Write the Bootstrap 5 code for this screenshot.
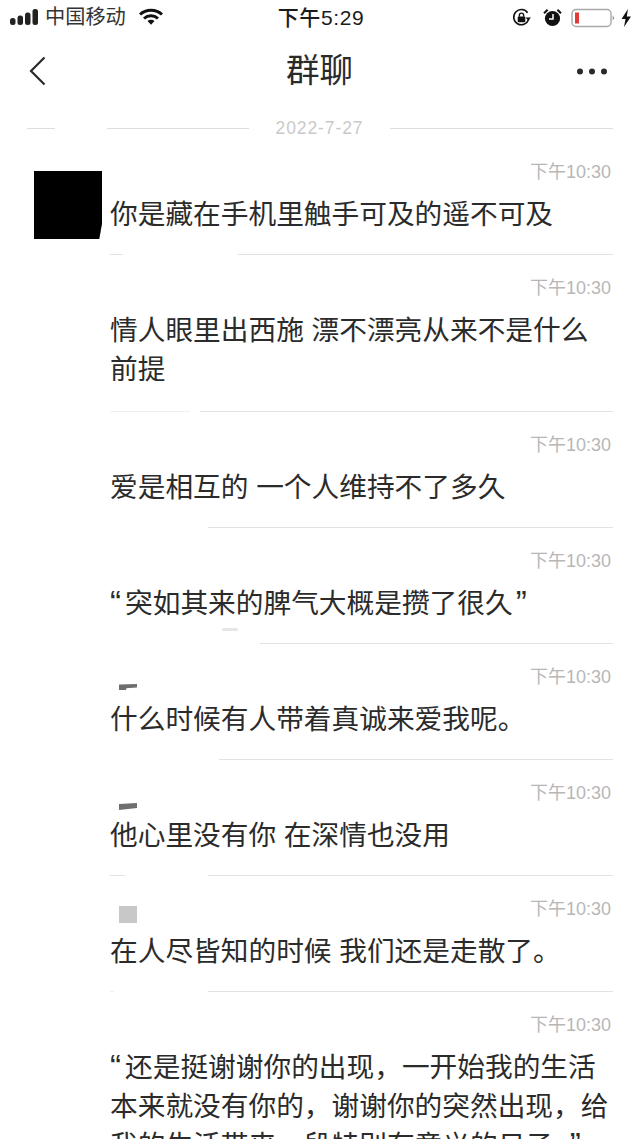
<!DOCTYPE html>
<html lang="zh-CN">
<head>
    <meta charset="UTF-8">
    <title>群聊</title>
    <link href="https://cdn.jsdelivr.net/npm/bootstrap@5.3.0/dist/css/bootstrap.min.css" rel="stylesheet">
    <style>
        body {
            font-family: "Liberation Sans", "Noto Sans CJK SC", sans-serif;
            background: #fff;
            color: #2b2b2b;
        }
        .phone { height: 1139px; overflow: hidden; }

        /* status bar */
        .status-bar { height: 35px; padding: 0 8px 0 10px; font-size: 20.2px; color: #333; }
        .status-left, .status-right { width: 220px; }
        .signal { margin-right: 6px; }
        .wifi { margin-left: 13px; }
        .status-time { font-size: 21px; font-weight: 500; color: #1c1c1c; letter-spacing: .6px; }
        .lock-icon { margin-right: 11px; }
        .alarm-icon { margin-right: 9px; }
        .battery { margin-right: 6px; }

        /* header */
        .chat-head { height: 72px; padding: 0 33px 0 29px; }
        .head-side { width: 60px; }
        .chat-title { font-size: 33.5px; line-height: 1; color: #2a2a2a; margin-left: 3px; }

        /* date separator */
        .date-line { height: 42px; padding: 0 27px; margin-bottom: -1px; }
        .date-text { font-size: 17.5px; letter-spacing: .9px; color: #c9c9c9; width: 141px; text-align: center; }
        .rule { height: 1px; background: #dedede; }
        .rule-a { width: 28px; margin-right: 52px; }
        .rule-b { width: 142px; }

        /* messages */
        .msg { padding: 22px 27px 0 34px; }
        .msg-first { padding-top: 13px; }
        .msg-side { width: 76px; flex: none; }
        .avatar {
            width: 68px;
            height: 68px;
            margin-top: 10px;
            background: #000;
            clip-path: polygon(0 0, 100% 0, 100% 78%, 96% 100%, 0 100%);
        }
        .msg-body { position: relative; flex: 1; min-width: 0; }
        .msg-time { font-size: 18px; line-height: 22px; color: #b7b7b7; text-align: right; padding-right: 2px; }
        .msg-text { font-size: 27.7px; line-height: 39px; margin: 12px 0 0; color: #2b2b2b; }
        .msg-tall { padding-bottom: 2px; }
        .quote-mark { font-size: 33px; line-height: 0; vertical-align: -1px; }
        .quote-open { margin-right: 4px; }
        .quote-close { margin-left: 3px; }
        .msg-rule { height: 1px; margin-top: 20px; }
        .msg-rule .rule { background: #e2e2e2; }
        .gap-r1 { width: 13px; margin-right: 115px; }
        .gap-r2 { width: 80px; margin-right: 10px; background: #efefef !important; }
        .gap-r3 { margin-left: 98px; }
        .gap-r4 { margin-left: 150px; }
        .gap-r5 { margin-left: 109px; }
        .gap-r6 { width: 15px; margin-right: 83px; }
        .gap-r7 { width: 4px; margin-right: 94px; background: #f0f0f0 !important; }

        /* leftover marks where names were blanked out */
        .scrap { position: absolute; background: #6f6f6f; }
        .scrap-dash { left: 9px; top: 18px; width: 18px; height: 6px; clip-path: polygon(0 10%, 100% 0, 100% 60%, 40% 70%, 40% 100%, 0 100%); }
        .scrap-dash-2 { left: 9px; top: 21px; width: 18px; height: 7px; clip-path: polygon(0 15%, 100% 0, 100% 70%, 0 100%); }
        .scrap-square { left: 9px; top: 8px; width: 18px; height: 17px; background: #c8c8c8; }
        .scrap-smear { left: 112px; top: 78px; width: 16px; height: 3px; background: #e6e6e6; border-radius: 2px; }
    </style>
</head>
<body>

<div class="phone">
    <!-- Status bar -->
    <div class="status-bar d-flex align-items-center justify-content-between">
        <div class="status-left d-flex align-items-center">
            <svg width="29" height="17" viewBox="0 0 29 17" class="signal">
                <rect x="0" y="9" width="5.5" height="7" rx="2.5" fill="#222"/>
                <rect x="7.5" y="6.5" width="5.5" height="9.5" rx="2.5" fill="#222"/>
                <rect x="15" y="3.5" width="5.5" height="12.5" rx="2.5" fill="#222"/>
                <rect x="22.5" y="0" width="5.5" height="16" rx="2.5" fill="#222"/>
            </svg>
            <span>中国移动</span>
            <svg width="24" height="18" viewBox="0 0 24 18" class="wifi">
                <path d="M1 6.5C7 .8 17 .8 23 6.5" fill="none" stroke="#111" stroke-width="3"/>
                <path d="M5 10.5c4-3.6 10-3.6 14 0" fill="none" stroke="#111" stroke-width="3"/>
                <path d="M8.5 13 12 16.8 15.5 13c-2-1.6-5-1.6-7 0z" fill="#111"/>
            </svg>
        </div>
        <div class="status-time">下午5:29</div>
        <div class="status-right d-flex align-items-center justify-content-end">
            <svg width="20" height="20" viewBox="0 0 20 20" class="lock-icon">
                <path d="M16.6 11.5A7.6 7.6 0 1 1 15.6 4.8" fill="none" stroke="#111" stroke-width="1.6"/>
                <path d="M13.6 9.5h5.4l-2.7 3.2z" fill="#111"/>
                <rect x="5.7" y="8.6" width="7.6" height="5.6" rx="1" fill="#111"/>
                <path d="M7.4 8.8V7.2a2.1 2.1 0 0 1 4.2 0v1.6" fill="none" stroke="#111" stroke-width="1.4"/>
            </svg>
            <svg width="19" height="19" viewBox="0 0 19 19" class="alarm-icon">
                <circle cx="9.5" cy="10.5" r="7.6" fill="#111"/>
                <path d="M1 5.2 4.6 1.8M18 5.2 14.4 1.8" stroke="#111" stroke-width="2"/>
                <path d="M10 6v5H6" fill="none" stroke="#fff" stroke-width="1.5"/>
            </svg>
            <svg width="44" height="20" viewBox="0 0 44 20" class="battery">
                <rect x="1" y="1.5" width="39" height="17" rx="4" fill="#fff" stroke="#a9a9a9" stroke-width="1.4"/>
                <rect x="4" y="4.5" width="4" height="11" fill="#e23b35"/>
                <path d="M41.6 7.5 43.4 10l-1.8 2.5z" fill="#8f8f8f"/>
            </svg>
            <svg width="11" height="18" viewBox="0 0 11 18">
                <path d="M7 0 .5 10h4L3 18l7-10.5H5.8z" fill="#111"/>
            </svg>
        </div>
    </div>

    <!-- Header -->
    <nav class="chat-head d-flex align-items-center justify-content-between">
        <div class="head-side d-flex">
            <svg width="18" height="30" viewBox="0 0 18 30">
                <path d="M15.5 1.5 2 15l13.5 13.5" fill="none" stroke="#2a2a2a" stroke-width="2.2"/>
            </svg>
        </div>
        <div class="chat-title">群聊</div>
        <div class="head-side d-flex justify-content-end">
            <svg width="30" height="7" viewBox="0 0 30 7">
                <circle cx="3" cy="3.5" r="3" fill="#2a2a2a"/>
                <circle cx="15" cy="3.5" r="3" fill="#2a2a2a"/>
                <circle cx="27" cy="3.5" r="3" fill="#2a2a2a"/>
            </svg>
        </div>
    </nav>

    <!-- Date -->
    <div class="date-line d-flex align-items-center">
        <div class="rule rule-a"></div>
        <div class="rule rule-b"></div>
        <div class="date-text">2022-7-27</div>
        <div class="rule flex-grow-1"></div>
    </div>

    <!-- Messages -->
    <div class="msg msg-first d-flex">
        <div class="msg-side"><div class="avatar"></div></div>
        <div class="msg-body">
            <div class="msg-time">下午10:30</div>
            <p class="msg-text">你是藏在手机里触手可及的遥不可及</p>
            <div class="msg-rule d-flex">
                <div class="rule gap-r1"></div>
                <div class="rule flex-grow-1"></div>
            </div>
        </div>
    </div>

    <div class="msg d-flex">
        <div class="msg-side"></div>
        <div class="msg-body">
            <div class="msg-time">下午10:30</div>
            <p class="msg-text msg-tall">情人眼里出西施 漂不漂亮从来不是什么前提</p>
            <div class="msg-rule d-flex">
                <div class="rule gap-r2"></div>
                <div class="rule flex-grow-1"></div>
            </div>
        </div>
    </div>

    <div class="msg d-flex">
        <div class="msg-side"></div>
        <div class="msg-body">
            <div class="msg-time">下午10:30</div>
            <p class="msg-text">爱是相互的 一个人维持不了多久</p>
            <div class="msg-rule d-flex">
                <div class="rule gap-r3 flex-grow-1"></div>
            </div>
        </div>
    </div>

    <div class="msg d-flex">
        <div class="msg-side"></div>
        <div class="msg-body">
            <div class="msg-time">下午10:30</div>
            <p class="msg-text"><span class="quote-mark quote-open">“</span>突如其来的脾气大概是攒了很久<span class="quote-mark quote-close">”</span></p>
            <div class="scrap scrap-smear"></div>
            <div class="msg-rule d-flex">
                <div class="rule gap-r4 flex-grow-1"></div>
            </div>
        </div>
    </div>

    <div class="msg d-flex">
        <div class="msg-side"></div>
        <div class="msg-body">
            <div class="scrap scrap-dash"></div>
            <div class="msg-time">下午10:30</div>
            <p class="msg-text">什么时候有人带着真诚来爱我呢。</p>
            <div class="msg-rule d-flex">
                <div class="rule gap-r5 flex-grow-1"></div>
            </div>
        </div>
    </div>

    <div class="msg d-flex">
        <div class="msg-side"></div>
        <div class="msg-body">
            <div class="scrap scrap-dash-2"></div>
            <div class="msg-time">下午10:30</div>
            <p class="msg-text">他心里没有你 在深情也没用</p>
            <div class="msg-rule d-flex">
                <div class="rule gap-r6"></div>
                <div class="rule flex-grow-1"></div>
            </div>
        </div>
    </div>

    <div class="msg d-flex">
        <div class="msg-side"></div>
        <div class="msg-body">
            <div class="scrap scrap-square"></div>
            <div class="msg-time">下午10:30</div>
            <p class="msg-text">在人尽皆知的时候 我们还是走散了。</p>
            <div class="msg-rule d-flex">
                <div class="rule gap-r7"></div>
                <div class="rule flex-grow-1"></div>
            </div>
        </div>
    </div>

    <div class="msg d-flex">
        <div class="msg-side"></div>
        <div class="msg-body">
            <div class="msg-time">下午10:30</div>
            <p class="msg-text"><span class="quote-mark quote-open">“</span>还是挺谢谢你的出现，一开始我的生活本来就没有你的，谢谢你的突然出现，给我的生活带来一段特别有意义的日子。<span class="quote-mark quote-close">”</span></p>
        </div>
    </div>
</div>

<script src="https://cdn.jsdelivr.net/npm/bootstrap@5.3.0/dist/js/bootstrap.bundle.min.js"></script>
</body>
</html>
